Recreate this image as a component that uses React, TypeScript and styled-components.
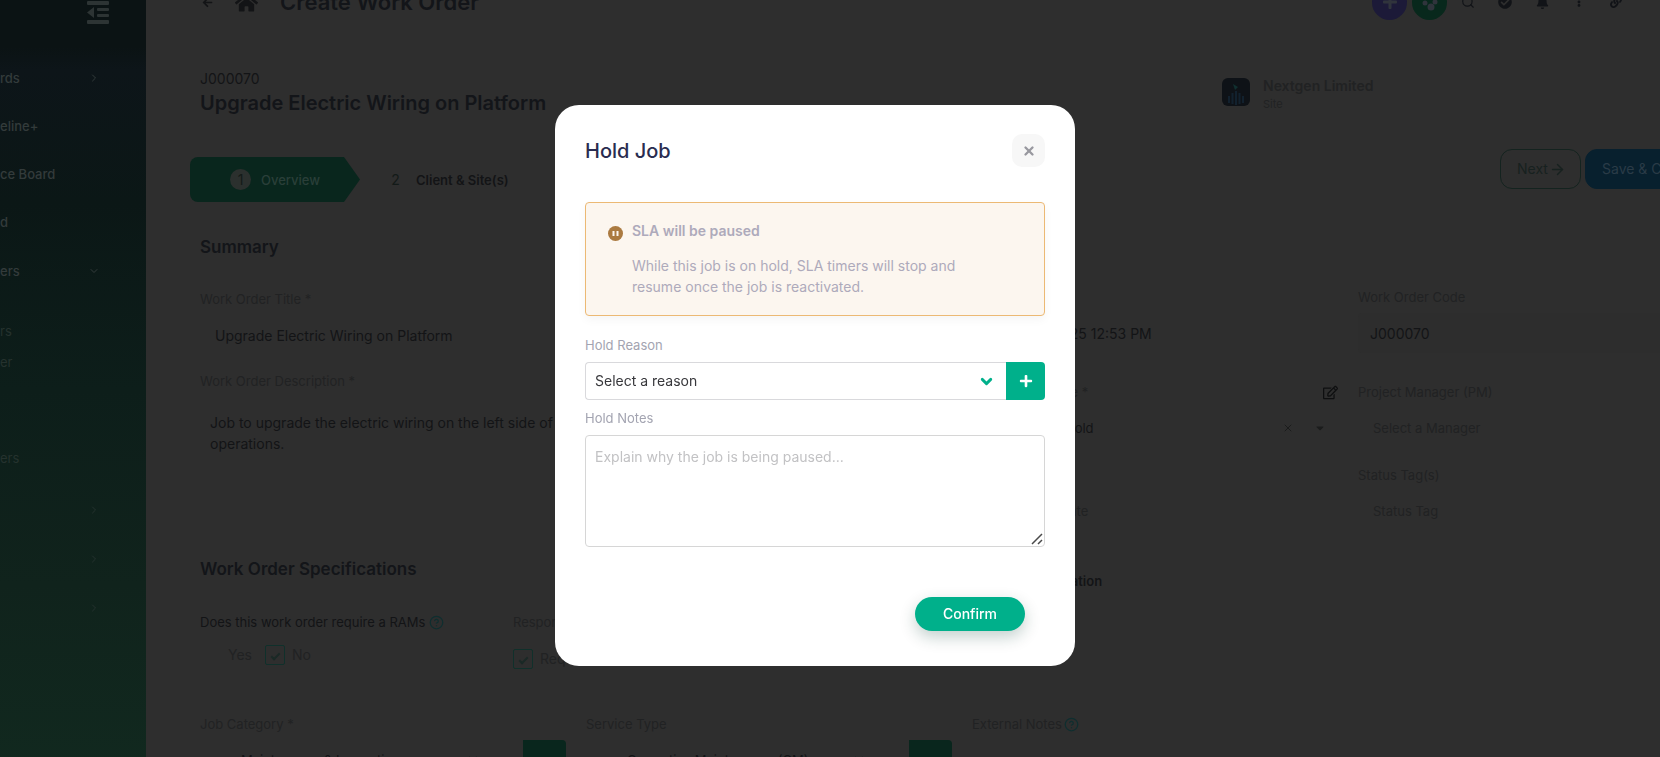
import React from "react";
import styled, { createGlobalStyle } from "styled-components";
import {
  FaArrowLeft,
  FaHome,
  FaPlus,
  FaCheckCircle,
  FaBell,
  FaEllipsisV,
  FaLink,
  FaRegEdit,
  FaCaretDown,
} from "react-icons/fa";
import { ArrowRight, ChevronDown, ChevronRight, CircleHelp, Search, X } from "lucide-react";

const palette = {
  page: "#2e2e2e",
  ink: "#131416",
  heading: "#131519",
  muted: "#212223",
  green: "#09261d",
  teal: "#10302b",
  accent: "#00b08b",
};

const GlobalStyle = createGlobalStyle`
  *, *::before, *::after { box-sizing: border-box; }
  body {
    margin: 0;
    background: ${palette.page};
    font-family: Inter, "Liberation Sans", sans-serif;
    font-size: 14px;
    line-height: 20px;
    overflow: hidden;
  }
  button, input, select, textarea { font: inherit; color: inherit; margin: 0; }
  button { cursor: pointer; border: 0; padding: 0; background: none; }
  h1, h2, h3, p { margin: 0; }
`;

/* ---------- page shell ---------- */

const Shell = styled.div`
  display: grid;
  grid-template-columns: 146px minmax(0, 1fr);
  height: 100vh;
  overflow: hidden;
  color: ${palette.ink};
`;

const Sidebar = styled.aside`
  display: flex;
  flex-direction: column;
  min-height: 0;
  overflow: hidden;
  background: linear-gradient(180deg, #0b1314 0%, #0b1314 6%, #0d1519 9%, #0b1716 26%, #0d1e1a 50%, #10231c 75%, #11291f 100%);
  color: #333b3b;
`;

const CollapseButton = styled.button`
  align-self: flex-end;
  flex: none;
  width: 22px;
  height: 24px;
  margin-right: 37px;
  color: #2d3434;
  svg { display: block; }
`;

const Nav = styled.nav`
  display: flex;
  flex-direction: column;
  flex: 1;
  padding: 30px 46px 0 0;
`;

const NavLink = styled.a<{ $height: number; $before?: number; $dim?: boolean }>`
  display: flex;
  align-items: center;
  justify-content: space-between;
  flex: none;
  height: ${(p) => p.$height}px;
  margin-top: ${(p) => p.$before ?? 0}px;
  font-size: 13px;
  font-weight: ${(p) => (p.$dim ? 400 : 500)};
  color: ${(p) => (p.$dim ? "#25322e" : "inherit")};
  text-decoration: none;
  white-space: nowrap;
  svg { margin-left: auto; }
`;

const Version = styled.footer`
  flex: none;
  height: 19px;
  line-height: 16px;
  font-size: 11px;
  color: #1b3429;
`;

const Main = styled.main`
  min-width: 0;
  margin-top: -28px;
`;

const TopBar = styled.header`
  display: flex;
  align-items: center;
  height: 60px;
  padding: 0 28px 0 54px;
`;

const TopTitle = styled.h1`
  flex: 1;
  margin-left: 22px;
  font-size: 22px;
  line-height: 28px;
  font-weight: 600;
  color: ${palette.heading};
`;

const BackButton = styled.button`
  display: flex;
  justify-content: center;
  width: 14px;
  margin-right: 21px;
`;

const TopActions = styled.div`
  display: flex;
  align-items: center;
  gap: 5px;
`;

const IconButton = styled.button<{ $fill?: string }>`
  display: grid;
  place-items: center;
  width: ${(p) => (p.$fill ? 35 : 32)}px;
  height: ${(p) => (p.$fill ? 35 : 32)}px;
  border-radius: 50%;
  background: ${(p) => p.$fill ?? "transparent"};
  color: ${(p) => (p.$fill ? "#30343c" : "#111317")};
`;

const Content = styled.div`
  width: calc(100% + 64px);
  padding: 37px 0 0 54px;
`;

const RecordHeader = styled.section`
  display: grid;
  grid-template-columns: minmax(0, 1fr) 502px;
`;

const RecordTitle = styled.h2`
  font-size: 20px;
  line-height: 28px;
  font-weight: 600;
  color: ${palette.heading};
`;

const Site = styled.div`
  display: flex;
  gap: 13px;
  padding-top: 7px;
  color: ${palette.muted};
`;

const SiteLogo = styled.svg`
  margin-top: 2px;
`;

const SiteName = styled.div`
  font-size: 14px;
  font-weight: 600;
`;

const SiteKind = styled.div`
  font-size: 11px;
  line-height: 16px;
`;

const StepRow = styled.div`
  display: flex;
  justify-content: space-between;
  align-items: flex-start;
  margin: 32px 0 32px -10px;
`;

const Steps = styled.ol`
  display: flex;
  list-style: none;
  margin: 8px 0 0;
  padding: 0;
`;

const Step = styled.li<{ $active?: boolean }>`
  display: flex;
  align-items: center;
  gap: 10px;
  height: 45px;
  padding-left: ${(p) => (p.$active ? 40 : 25)}px;
  width: ${(p) => (p.$active ? 170 : 200)}px;
  font-size: 13px;
  font-weight: ${(p) => (p.$active ? 500 : 600)};
  color: ${(p) => (p.$active ? "#2a3f39" : palette.ink)};
  background: ${(p) => (p.$active ? palette.green : "transparent")};
  border-radius: 8px;
  clip-path: ${(p) =>
    p.$active ? "polygon(0 0, 154px 0, 100% 50%, 154px 100%, 0 100%)" : "none"};
`;

const StepNumber = styled.span<{ $active?: boolean }>`
  display: grid;
  place-items: center;
  width: 21px;
  height: 21px;
  border-radius: 50%;
  font-size: 14px;
  font-weight: 400;
  color: #131a18;
  background: ${(p) => (p.$active ? "#2b302e" : "transparent")};
`;

const ButtonRow = styled.div`
  display: flex;
  gap: 4px;
`;

const PageButton = styled.button<{ $primary?: boolean }>`
  display: flex;
  align-items: center;
  gap: 1px;
  height: 40px;
  width: ${(p) => (p.$primary ? 139 : 81)}px;
  padding: 0 16px;
  border: 1px solid ${(p) => (p.$primary ? "#08202e" : "#14231f")};
  border-radius: 12px;
  background: ${(p) => (p.$primary ? "#08202e" : "transparent")};
  color: ${(p) => (p.$primary ? "#2a3b47" : "#17211f")};
  white-space: nowrap;
  svg { flex: none; }
`;

/* ---------- form ---------- */

const SectionTitle = styled.h3`
  font-size: 17px;
  line-height: 26px;
  font-weight: 600;
  color: ${palette.heading};
`;

const FormGrid = styled.div`
  display: grid;
  grid-template-columns: repeat(4, minmax(0, 1fr));
  column-gap: 20px;
  align-items: start;
`;

const SummaryGrid = styled(FormGrid)`
  margin-top: 27px;
`;

const LowerGrid = styled(FormGrid)`
  margin-top: 45px;
`;

const WideColumn = styled.div`
  grid-column: span 2;
  padding-top: 2px;
`;

const FieldBox = styled.div<{ $after?: number }>`
  margin-bottom: ${(p) => p.$after ?? 0}px;
`;

const FieldLabel = styled.label`
  display: flex;
  align-items: center;
  gap: 2px;
  height: 20px;
  margin-bottom: 6px;
  font-size: 13px;
  color: ${palette.muted};
`;

const Control = styled.div<{ $filled?: boolean }>`
  display: flex;
  align-items: center;
  height: 40px;
  border-radius: 4px;
  background: ${(p) => (p.$filled ? "#2d2d2d" : "transparent")};
`;

const TextInput = styled.input<{ $size?: number; $indent?: number }>`
  flex: 1;
  min-width: 0;
  height: 100%;
  padding: 0 0 0 ${(p) => p.$indent ?? 15}px;
  border: 0;
  outline: 0;
  background: none;
  font-size: ${(p) => p.$size ?? 14}px;
  color: ${palette.ink};
  &::placeholder { color: ${palette.muted}; opacity: 1; }
`;

const Description = styled.textarea`
  display: block;
  width: 100%;
  height: 119px;
  margin-bottom: 40px;
  padding: 15px 10px;
  border: 0;
  outline: 0;
  resize: none;
  background: none;
  line-height: 21px;
`;

const EditButton = styled.button`
  margin-left: auto;
  height: 15px;
  color: #0e0f10;
`;

const ControlIcons = styled.span`
  display: flex;
  gap: 20px;
  padding-right: 12px;
  color: #1b1c1c;
`;

const SubHeading = styled.div`
  margin-top: 40px;
  font-size: 13px;
  font-weight: 600;
`;

const SpecRow = styled.div`
  display: grid;
  grid-template-columns: 313px 1fr;
  margin-top: 30px;
`;

const Question = styled.div<{ $muted?: boolean }>`
  display: flex;
  align-items: center;
  gap: 4px;
  font-size: 13px;
  white-space: nowrap;
  color: ${(p) => (p.$muted ? palette.muted : "inherit")};
`;

const HelpIcon = styled(CircleHelp)`
  color: #0f2e2f;
  flex: none;
`;

const ChoiceRow = styled.div<{ $indent?: number }>`
  display: flex;
  align-items: center;
  gap: 7px;
  height: 20px;
  margin-top: 13px;
  padding-left: ${(p) => p.$indent ?? 0}px;
  color: ${palette.muted};
`;

const ResponseChoice = styled(ChoiceRow)`
  margin-top: 17px;
`;

const ChoiceLabel = styled.label`
  display: flex;
  align-items: center;
  gap: 7px;
`;

const Tick = styled.input`
  appearance: none;
  display: grid;
  place-items: center;
  width: 20px;
  height: 20px;
  border: 1px solid ${palette.teal};
  border-radius: 2px;
  &:checked::after {
    content: "";
    width: 5px;
    height: 9px;
    border: solid #1a2926;
    border-width: 0 2px 2px 0;
    transform: rotate(45deg);
  }
`;

const YesOption = styled.label`
  display: flex;
  width: 30px;
`;

const HiddenTick = styled.input`
  appearance: none;
  width: 0;
  height: 0;
`;

const AddBlock = styled.button`
  width: 43px;
  height: 40px;
  border-radius: 0 4px 4px 0;
  background: ${palette.green};
`;

/* ---------- dialog ---------- */

const Backdrop = styled.div`
  position: fixed;
  inset: 0;
  display: flex;
  align-items: center;
  justify-content: center;
  padding: 14px 30px 0 0;
`;

const Dialog = styled.div`
  width: 520px;
  max-width: 100%;
  padding: 29px 30px 35px;
  border-radius: 24px;
  background: #fff;
`;

const DialogHeader = styled.div`
  display: flex;
  align-items: center;
  justify-content: space-between;
  margin-bottom: 35px;
`;

const DialogTitle = styled.h2`
  font-size: 20px;
  line-height: 28px;
  font-weight: 500;
  color: #2a2c50;
`;

const CloseButton = styled.button`
  display: grid;
  place-items: center;
  width: 33px;
  height: 33px;
  border-radius: 10px;
  background: #f7f7f7;
  color: #98989f;
`;

const Notice = styled.div`
  display: flex;
  gap: 9px;
  margin-bottom: 19px;
  padding: 17px 44px 18px 22px;
  border: 1px solid #ecb974;
  border-radius: 4px;
  background: #fcf6ef;
  box-shadow: 0 4px 10px rgba(0, 0, 0, 0.04);
  color: #aeaabb;
  line-height: 21px;
`;

const NoticeIcon = styled.svg`
  flex: none;
  margin-top: 6px;
`;

const NoticeTitle = styled.h3`
  margin-bottom: 14px;
  font-size: 14px;
  line-height: 21px;
  font-weight: 600;
`;

const DialogLabel = styled.label`
  display: block;
  margin-bottom: 7px;
  font-size: 13px;
  color: #a3a4b1;
`;

const ReasonRow = styled.div`
  display: flex;
  margin-bottom: 8px;
`;

const SelectWrap = styled.div`
  position: relative;
  flex: 1;
  svg {
    position: absolute;
    right: 11px;
    top: 11px;
    color: ${palette.accent};
    pointer-events: none;
  }
`;

const ReasonSelect = styled.select`
  appearance: none;
  display: block;
  width: 100%;
  height: 38px;
  padding: 0 30px 0 9px;
  border: 1px solid #d9d9dc;
  border-right: 0;
  border-radius: 4px 0 0 4px;
  outline: 0;
  background: #fff;
  color: #37373b;
`;

const AddReason = styled.button`
  display: grid;
  place-items: center;
  width: 39px;
  height: 38px;
  border-radius: 0 4px 4px 0;
  background: ${palette.accent};
  color: #fff;
`;

const NotesWrap = styled.div`
  position: relative;
  svg {
    position: absolute;
    right: 2px;
    bottom: 2px;
    pointer-events: none;
  }
`;

const Notes = styled.textarea`
  display: block;
  width: 100%;
  height: 112px;
  padding: 10px 9px;
  border: 1px solid #d6d6d6;
  border-radius: 4px;
  outline: 0;
  resize: none;
  background: #fff;
  line-height: 21px;
  color: #37373b;
  &::placeholder { color: #c2c2c4; opacity: 1; }
`;

const DialogFooter = styled.div`
  display: flex;
  justify-content: flex-end;
  margin-top: 50px;
  padding-right: 20px;
`;

const ConfirmButton = styled.button`
  width: 110px;
  height: 34px;
  border-radius: 17px;
  background: ${palette.accent};
  color: #fff;
  font-weight: 500;
  box-shadow: 0 6px 16px rgba(0, 60, 45, 0.24);
`;

type NavItem = {
  label?: string;
  height: number;
  before?: number;
  dim?: boolean;
  arrow?: "right" | "down";
};

const navItems: NavItem[] = [
  { label: "rds", height: 48, arrow: "right" },
  { label: "eline+", height: 48 },
  { label: "ce Board", height: 48 },
  { label: "d", height: 48 },
  { label: "ers", height: 50, arrow: "down" },
  { label: "rs", height: 31, before: 19, dim: true },
  { label: "er", height: 31, dim: true },
  { label: "ers", height: 31, before: 65, dim: true },
  { height: 49, before: 12, dim: true, arrow: "right" },
  { height: 49, dim: true, arrow: "right" },
  { height: 49, dim: true, arrow: "right" },
];

const SelectField = ({ id, label, value }: { id: string; label: string; value: string }) => (
  <FieldBox>
    <FieldLabel htmlFor={id}>{label}</FieldLabel>
    <Control>
      <TextInput id={id} defaultValue={value} $indent={41} $size={13} />
      <ControlIcons>
        <X size={12} />
        <FaCaretDown size={12} />
      </ControlIcons>
      <AddBlock aria-label={`Add ${label}`} />
    </Control>
  </FieldBox>
);

const App = () => (
  <>
    <GlobalStyle />
    <Shell>
      <Sidebar>
        <CollapseButton aria-label="Collapse menu">
          <svg width="22" height="24" viewBox="0 0 22 24" fill="currentColor">
            <rect x="0" y="1" width="22" height="4" rx="1" />
            <rect x="10" y="8" width="12" height="3" rx="1" />
            <rect x="10" y="14" width="12" height="3" rx="1" />
            <rect x="0" y="20" width="22" height="4" rx="1" />
            <path d="M7 7v11L0 12.500z" />
          </svg>
        </CollapseButton>
        <Nav>
          {navItems.map((item, i) => (
            <NavLink
              key={i}
              href="#"
              $height={item.height}
              $before={item.before}
              $dim={item.dim}
              aria-label={item.label ?? "Menu group"}
            >
              {item.label}
              {item.arrow === "right" && <ChevronRight size={12} />}
              {item.arrow === "down" && <ChevronDown size={12} />}
            </NavLink>
          ))}
        </Nav>
        <Version>0.0.1.264</Version>
      </Sidebar>

      <Main>
        <TopBar>
          <BackButton aria-label="Back"><FaArrowLeft size={11} /></BackButton>
          <FaHome size={23} />
          <TopTitle>Create Work Order</TopTitle>
          <TopActions>
            <IconButton $fill="#1c1a38" aria-label="Add"><FaPlus size={16} /></IconButton>
            <IconButton $fill="#08281c" aria-label="Team">
              <svg width="18" height="18" viewBox="0 0 18 18" fill="currentColor">
                <circle cx="9" cy="4" r="3" />
                <circle cx="4" cy="10" r="2.500" />
                <circle cx="14" cy="9" r="2.500" />
                <circle cx="10" cy="14" r="3.500" />
              </svg>
            </IconButton>
            <IconButton aria-label="Search"><Search size={14} /></IconButton>
            <IconButton aria-label="Tasks"><FaCheckCircle size={14} /></IconButton>
            <IconButton aria-label="Notifications"><FaBell size={13} /></IconButton>
            <IconButton aria-label="More"><FaEllipsisV size={10} /></IconButton>
            <IconButton aria-label="Links"><FaLink size={12} /></IconButton>
          </TopActions>
        </TopBar>

        <Content>
          <RecordHeader>
            <div>
              <p>J000070</p>
              <RecordTitle>Upgrade Electric Wiring on Platform</RecordTitle>
            </div>
            <Site>
              <SiteLogo width="28" height="28" viewBox="0 0 28 28">
                <rect width="28" height="28" rx="6" fill="#0e1217" />
                <path d="M11 6l5 3-3 3z" fill="#113030" />
                <path d="M7 18v7M10.500 15v11M14 13v14M17.500 15v11M21 18v7" stroke="#12212e" strokeWidth="2" />
              </SiteLogo>
              <div>
                <SiteName>Nextgen Limited</SiteName>
                <SiteKind>Site</SiteKind>
              </div>
            </Site>
          </RecordHeader>

          <StepRow>
            <Steps>
              <Step $active><StepNumber $active>1</StepNumber>Overview</Step>
              <Step><StepNumber>2</StepNumber>Client &amp; Site(s)</Step>
            </Steps>
            <ButtonRow>
              <PageButton>Next <ArrowRight size={17} /></PageButton>
              <PageButton $primary>Save &amp; Continue</PageButton>
            </ButtonRow>
          </StepRow>

          <SectionTitle>Summary</SectionTitle>
          <SummaryGrid>
            <WideColumn>
              <FieldBox $after={16}>
                <FieldLabel htmlFor="title">Work Order Title *</FieldLabel>
                <Control><TextInput id="title" defaultValue="Upgrade Electric Wiring on Platform" /></Control>
              </FieldBox>
              <FieldLabel htmlFor="description">Work Order Description *</FieldLabel>
              <Description
                id="description"
                defaultValue={"Job to upgrade the electric wiring on the left side of the platform to support train\noperations."}
              />
              <SectionTitle>Work Order Specifications</SectionTitle>
              <SpecRow>
                <div>
                  <Question>Does this work order require a RAMs <HelpIcon size={15} /></Question>
                  <ChoiceRow $indent={28}>
                    <YesOption><HiddenTick type="checkbox" />Yes</YesOption>
                    <ChoiceLabel><Tick type="checkbox" defaultChecked />No</ChoiceLabel>
                  </ChoiceRow>
                </div>
                <div>
                  <Question $muted>Response Required</Question>
                  <ResponseChoice>
                    <ChoiceLabel><Tick type="checkbox" defaultChecked />Required</ChoiceLabel>
                  </ResponseChoice>
                </div>
              </SpecRow>
            </WideColumn>
            <div>
              <FieldBox $after={29}>
                <FieldLabel htmlFor="created">Date Created</FieldLabel>
                <Control><TextInput id="created" defaultValue="Oct 21, 2025 12:53 PM" $indent={31} /></Control>
              </FieldBox>
              <FieldBox $after={17}>
                <FieldLabel htmlFor="status">
                  Work Order State *
                  <EditButton aria-label="Edit status"><FaRegEdit size={15} /></EditButton>
                </FieldLabel>
                <Control>
                  <TextInput id="status" defaultValue="Work Put On Hold" $size={13} $indent={12} />
                  <ControlIcons><X size={12} /><FaCaretDown size={12} /></ControlIcons>
                </Control>
              </FieldBox>
              <FieldBox>
                <FieldLabel htmlFor="substatus">Sub Status</FieldLabel>
                <Control><TextInput id="substatus" placeholder="Select Sub State" $size={13} /></Control>
              </FieldBox>
              <SubHeading>Location Information</SubHeading>
            </div>
            <div>
              <FieldBox $after={29}>
                <FieldLabel htmlFor="code">Work Order Code</FieldLabel>
                <Control $filled><TextInput id="code" defaultValue="J000070" $indent={12} /></Control>
              </FieldBox>
              <FieldBox $after={17}>
                <FieldLabel htmlFor="manager">Project Manager (PM)</FieldLabel>
                <Control><TextInput id="manager" placeholder="Select a Manager" $size={13} /></Control>
              </FieldBox>
              <FieldBox>
                <FieldLabel htmlFor="tags">Status Tag(s)</FieldLabel>
                <Control><TextInput id="tags" placeholder="Status Tag" $size={13} /></Control>
              </FieldBox>
            </div>
          </SummaryGrid>

          <LowerGrid>
            <SelectField id="category" label="Job Category *" value="Maintenance & Inspection" />
            <SelectField id="service" label="Service Type" value="Corrective Maintenance (CM)" />
            <FieldBox>
              <FieldLabel htmlFor="external">External Notes <HelpIcon size={15} /></FieldLabel>
              <Control><TextInput id="external" /></Control>
            </FieldBox>
          </LowerGrid>
        </Content>
      </Main>
    </Shell>

    <Backdrop>
      <Dialog role="dialog" aria-modal="true" aria-labelledby="hold-title">
        <DialogHeader>
          <DialogTitle id="hold-title">Hold Job</DialogTitle>
          <CloseButton aria-label="Close"><X size={14} strokeWidth={4} /></CloseButton>
        </DialogHeader>
        <Notice>
          <NoticeIcon width="15" height="15" viewBox="0 0 15 15">
            <circle cx="7.500" cy="7.500" r="7.500" fill="#ab7a40" />
            <rect x="4.500" y="5" width="2" height="5" fill="#fcf6ef" />
            <rect x="8.500" y="5" width="2" height="5" fill="#fcf6ef" />
          </NoticeIcon>
          <div>
            <NoticeTitle>SLA will be paused</NoticeTitle>
            <p>While this job is on hold, SLA timers will stop and resume once the job is reactivated.</p>
          </div>
        </Notice>
        <DialogLabel htmlFor="reason">Hold Reason</DialogLabel>
        <ReasonRow>
          <SelectWrap>
            <ReasonSelect id="reason" defaultValue="">
              <option value="">Select a reason</option>
            </ReasonSelect>
            <ChevronDown size={17} strokeWidth={4} />
          </SelectWrap>
          <AddReason aria-label="Add reason"><FaPlus size={14} /></AddReason>
        </ReasonRow>
        <DialogLabel htmlFor="notes">Hold Notes</DialogLabel>
        <NotesWrap>
          <Notes id="notes" placeholder="Explain why the job is being paused..." />
          <svg width="12" height="12" viewBox="0 0 12 12" stroke="#4a4a4a" strokeWidth="1.500" fill="none">
            <path d="M1 11L11 1M7 11L11 7" />
          </svg>
        </NotesWrap>
        <DialogFooter>
          <ConfirmButton>Confirm</ConfirmButton>
        </DialogFooter>
      </Dialog>
    </Backdrop>
  </>
);

export default App;
